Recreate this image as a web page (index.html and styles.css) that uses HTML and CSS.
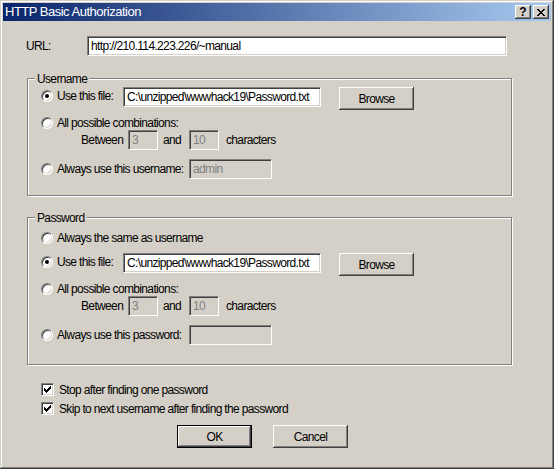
FILE: index.html
```html
<!DOCTYPE html>
<html>
<head>
<meta charset="utf-8">
<title>HTTP Basic Authorization</title>
<link rel="stylesheet" href="styles.css">
</head>
<body>
<div class="window">
  <div class="titlebar">
    <span class="title">HTTP Basic Authorization</span>
    <div class="caption-btns">
      <span class="cap-btn help">?</span>
      <span class="cap-btn close"><svg width="8" height="7" viewBox="0 0 8 7"><path d="M0 0h2v1H0zM6 0h2v1H6zM1 1h2v1H1zM5 1h2v1H5zM2 2h4v1H2zM3 3h2v1H3zM2 4h4v1H2zM1 5h2v1H1zM5 5h2v1H5zM0 6h2v1H0zM6 6h2v1H6z" fill="#000"/></svg></span>
    </div>
  </div>
  <div class="content">
    <div class="url-row">
      <span class="url-label">URL:</span>
      <div class="field url-field">http://210.114.223.226/~manual</div>
    </div>

    <div class="group user-group">
      <span class="group-title">Username</span>
      <div class="row row-file">
        <span class="opt opt-file"><span class="radio on"></span>Use this file:</span>
        <div class="field file-field">C:\unzipped\wwwhack19\Password.txt</div>
        <span class="btn browse">Browse</span>
      </div>
      <div class="row row-opt">
        <span class="opt"><span class="radio"></span>All possible combinations:</span>
      </div>
      <div class="row row-between">
        <span class="between-label">Between</span>
        <div class="field disabled small">3</div>
        <span class="and-label">and</span>
        <div class="field disabled small">10</div>
        <span class="chars-label">characters</span>
      </div>
      <div class="row row-always">
        <span class="opt opt-always"><span class="radio"></span>Always use this username:</span>
        <div class="field disabled always-field">admin</div>
      </div>
    </div>

    <div class="group pass-group">
      <span class="group-title">Password</span>
      <div class="row row-same">
        <span class="opt"><span class="radio"></span>Always the same as username</span>
      </div>
      <div class="row row-file">
        <span class="opt opt-file"><span class="radio on"></span>Use this file:</span>
        <div class="field file-field">C:\unzipped\wwwhack19\Password.txt</div>
        <span class="btn browse">Browse</span>
      </div>
      <div class="row row-opt">
        <span class="opt"><span class="radio"></span>All possible combinations:</span>
      </div>
      <div class="row row-between">
        <span class="between-label">Between</span>
        <div class="field disabled small">3</div>
        <span class="and-label">and</span>
        <div class="field disabled small">10</div>
        <span class="chars-label">characters</span>
      </div>
      <div class="row row-always">
        <span class="opt opt-always"><span class="radio"></span>Always use this password:</span>
        <div class="field disabled always-field"></div>
      </div>
    </div>

    <div class="check-row first">
      <span class="checkbox"><svg width="11" height="11" viewBox="1 1 11 11"><path d="M3 5h1v3H3zM4 6h1v3H4zM5 7h1v3H5zM6 6h1v3H6zM7 5h1v3H7zM8 4h1v3H8zM9 3h1v3H9z" fill="#000"/></svg></span>
      <span>Stop after finding one password</span>
    </div>
    <div class="check-row">
      <span class="checkbox"><svg width="11" height="11" viewBox="1 1 11 11"><path d="M3 5h1v3H3zM4 6h1v3H4zM5 7h1v3H5zM6 6h1v3H6zM7 5h1v3H7zM8 4h1v3H8zM9 3h1v3H9z" fill="#000"/></svg></span>
      <span>Skip to next username after finding the password</span>
    </div>

    <div class="buttons">
      <span class="btn default">OK</span>
      <span class="btn">Cancel</span>
    </div>
  </div>
</div>
</body>
</html>
```

FILE: styles.css
```css
html, body {
  margin: 0;
  padding: 0;
  background: #d4d0c8;
}
body {
  font-family: "Liberation Sans", Arial, sans-serif;
  font-size: 12px;
  letter-spacing: -0.65px;
  line-height: 14px;
  color: #000;
}
.window {
  width: 554px;
  height: 469px;
  box-sizing: border-box;
  padding: 3px;
  background: #d4d0c8;
  box-shadow: inset -1px -1px #404040, inset 1px 1px #d4d0c8, inset -2px -2px #808080, inset 2px 2px #fff;
}
.titlebar {
  height: 18px;
  display: flex;
  align-items: center;
  padding: 0 2px;
  background: linear-gradient(to right, #0a246a, #a6caf0);
  color: #fff;
}
.title {
  font-size: 13px;
  letter-spacing: -0.5px;
  line-height: 18px;
  white-space: nowrap;
}
.caption-btns {
  margin-left: auto;
  display: flex;
  gap: 2px;
}
.cap-btn {
  width: 16px;
  height: 14px;
  box-sizing: border-box;
  display: flex;
  align-items: center;
  justify-content: center;
  background: #d4d0c8;
  color: #000;
  box-shadow: inset -1px -1px #404040, inset 1px 1px #fff, inset -2px -2px #808080;
}
.cap-btn svg { display: block; }
.help {
  font-weight: bold;
  font-size: 12px;
  letter-spacing: 0;
  line-height: 14px;
}
.url-row {
  display: flex;
  align-items: center;
  margin-top: 15px;
  padding-left: 23px;
}
.url-label { width: 61px; }
.field {
  box-sizing: border-box;
  height: 20px;
  background: #fff;
  border: 1px solid;
  border-color: #808080 #fff #fff #808080;
  box-shadow: inset 1px 1px #404040, inset -1px -1px #d4d0c8;
  padding: 0 3px;
  line-height: 18px;
  white-space: nowrap;
  overflow: hidden;
  flex: none;
}
.url-field { width: 420px; }
.file-field { width: 198px; }
.field.disabled {
  background: #d4d0c8;
  color: #808080;
}
.field.small { width: 30px; }
.always-field { width: 83px; }

.group {
  position: relative;
  width: 485px;
  box-sizing: border-box;
  margin-left: 24px;
  border: 1px solid #808080;
  box-shadow: inset 1px 1px #fff, 1px 1px #fff;
}
.user-group {
  margin-top: 22px;
  padding: 8px 0 16px;
}
.pass-group {
  margin-top: 21px;
  padding: 12px 0 19px;
}
.group-title {
  position: absolute;
  left: 7px;
  top: -7px;
  padding: 0 2px;
  background: #d4d0c8;
  line-height: 14px;
}
.row {
  display: flex;
  align-items: center;
  padding-left: 13px;
}
.row-file {
  align-items: flex-start;
  height: 23px;
}
.pass-group .row-file { margin-top: 7px; }
.row-same { height: 16px; }
.row-opt {
  height: 14px;
  margin-top: 6px;
}
.row-between { height: 20px; }
.row-always {
  height: 20px;
  margin-top: 9px;
}
.opt {
  display: flex;
  align-items: center;
  gap: 4px;
  white-space: nowrap;
  flex: none;
}
.opt-file {
  width: 82px;
  height: 18px;
}
.opt-always { width: 148px; }
.radio {
  position: relative;
  width: 12px;
  height: 12px;
  box-sizing: border-box;
  border-radius: 50%;
  border: 1px solid;
  border-color: #808080 #fff #fff #808080;
  background: #fff;
  box-shadow: inset 1px 1px #404040, inset -1px -1px #d4d0c8;
  flex: none;
}
.radio.on::after {
  content: "";
  position: absolute;
  left: 3px;
  top: 3px;
  width: 4px;
  height: 4px;
  border-radius: 50%;
  background: #000;
}
.between-label {
  margin-left: 40px;
  width: 47px;
}
.and-label {
  width: 26px;
  padding-left: 5px;
}
.chars-label { margin-left: 7px; }

.btn {
  box-sizing: border-box;
  width: 75px;
  height: 23px;
  display: flex;
  align-items: center;
  justify-content: center;
  background: #d4d0c8;
  box-shadow: inset -1px -1px #404040, inset 1px 1px #fff, inset -2px -2px #808080;
  flex: none;
}
.browse { margin-left: 18px; }
.btn.default {
  border: 1px solid #000;
}

.check-row {
  display: flex;
  align-items: center;
  height: 13px;
  margin: 6px 0 0 38px;
}
.check-row.first { margin-top: 18px; }
.checkbox {
  width: 13px;
  height: 13px;
  box-sizing: border-box;
  border: 1px solid;
  border-color: #808080 #fff #fff #808080;
  box-shadow: inset 1px 1px #404040, inset -1px -1px #d4d0c8;
  background: #fff;
  margin-right: 5px;
  flex: none;
}
.checkbox svg { display: block; }
.buttons {
  display: flex;
  gap: 21px;
  margin: 10px 0 0 174px;
}
```
